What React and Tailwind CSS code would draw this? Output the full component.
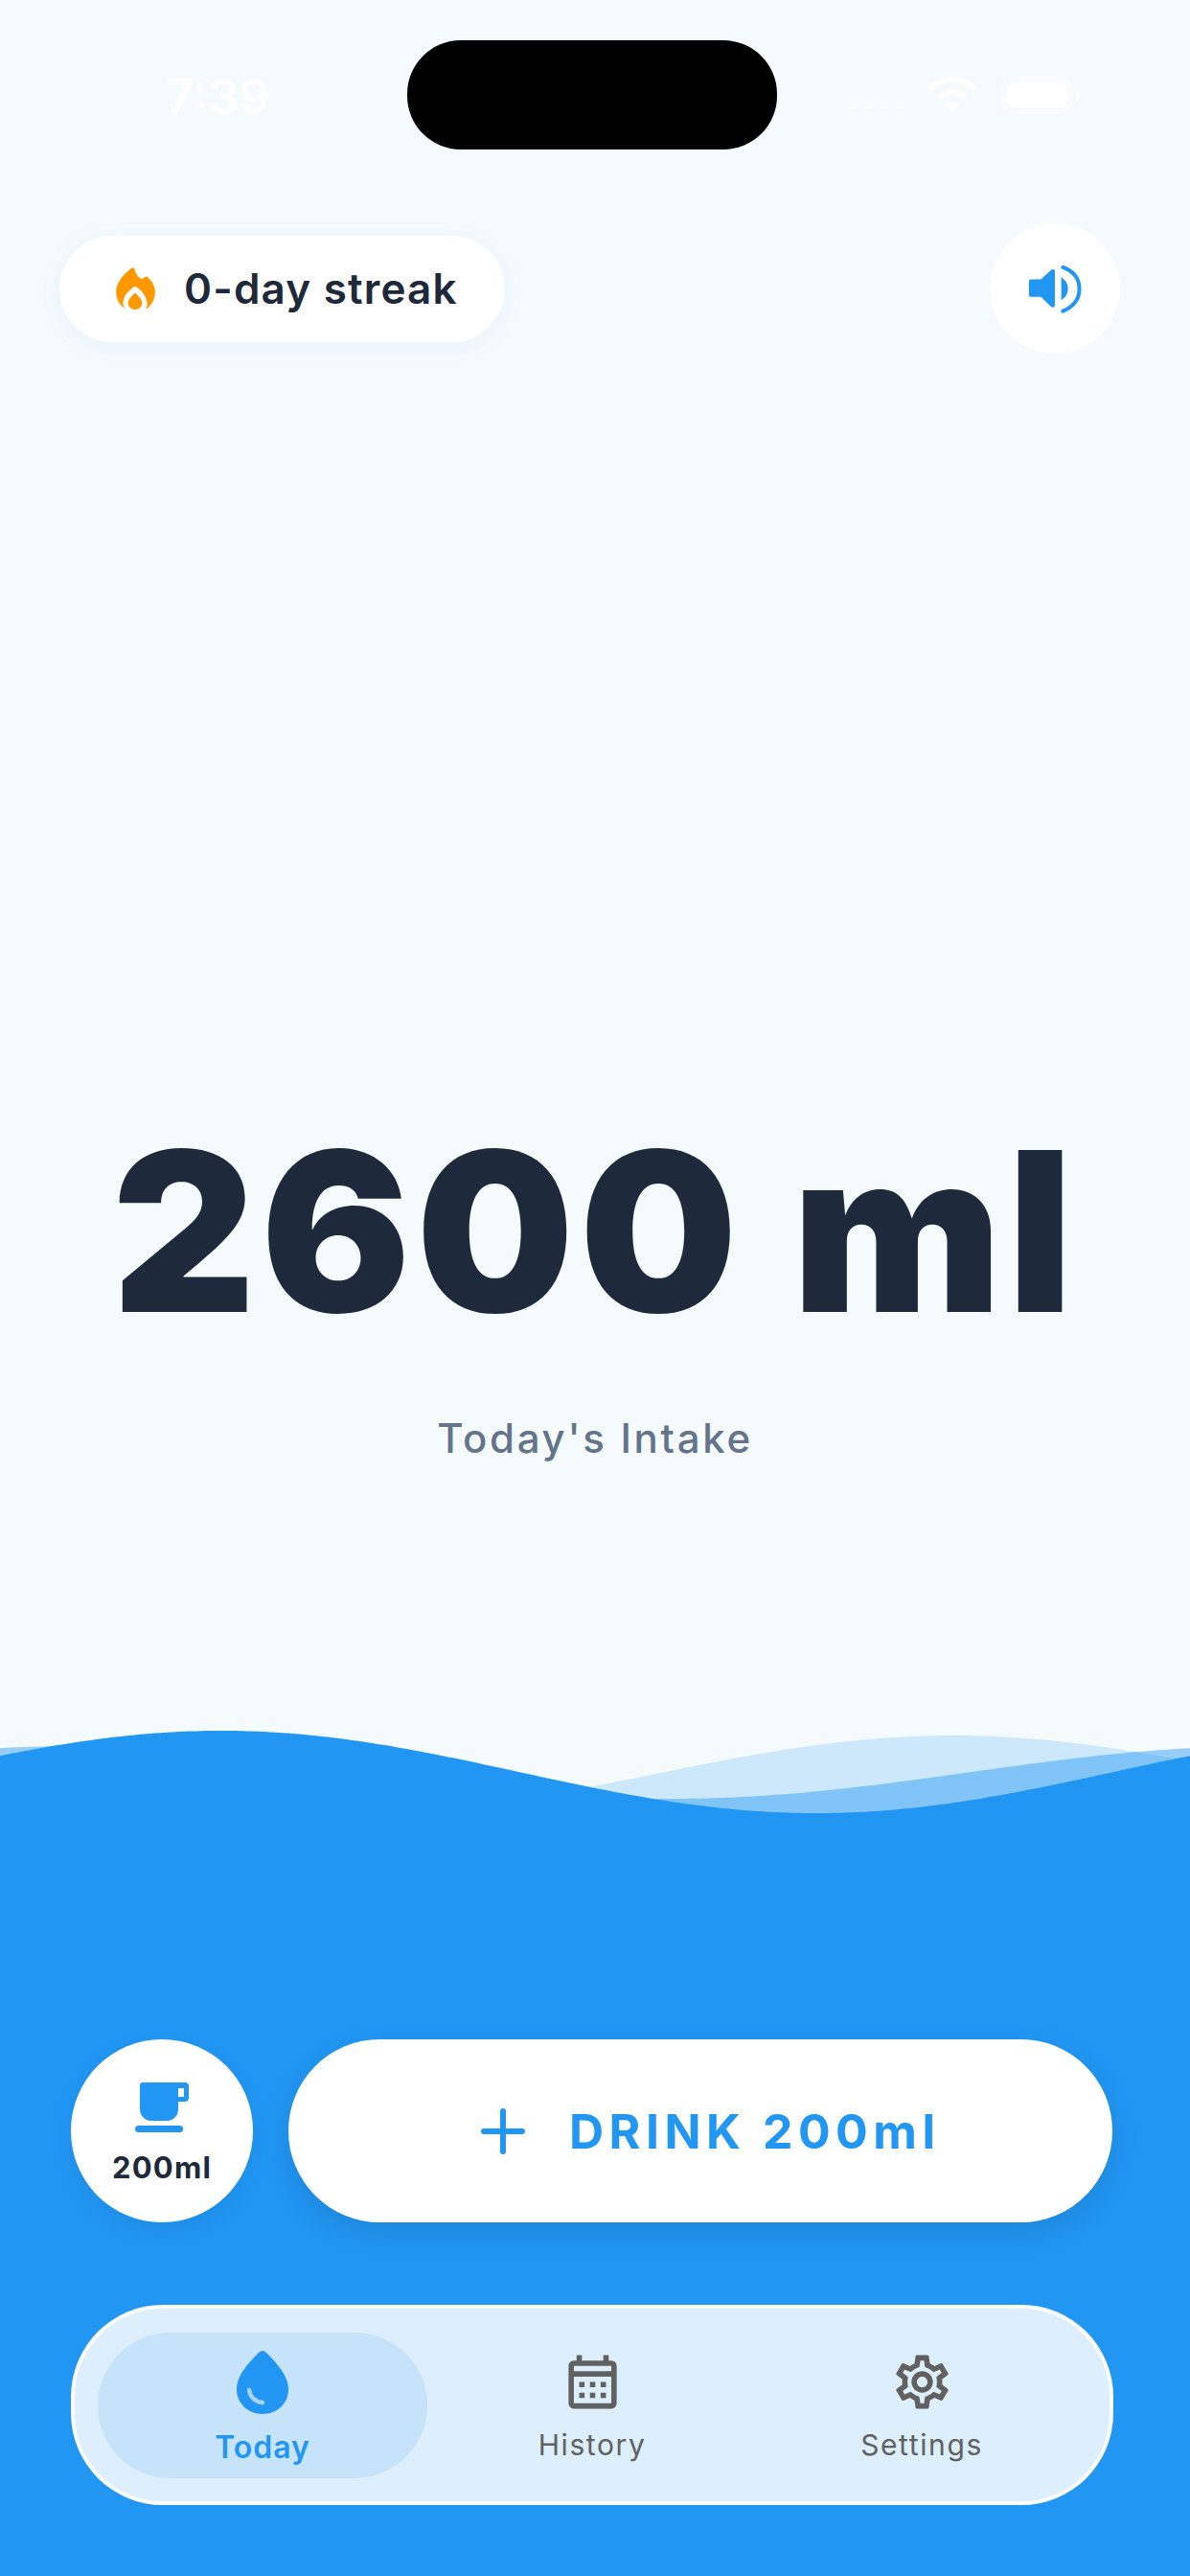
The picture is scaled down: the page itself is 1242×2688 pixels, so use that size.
import { MdOutlineSettings } from "react-icons/md";

const font = "font-[family-name:Inter,sans-serif]";

// sine wave closed along the bottom of the 1242x100 box
function wavePath(center, amp, peakX) {
  let d = "M0 100";
  for (let x = 0; x <= 1242; x += 6) {
    const y = center - amp * Math.cos(((x - peakX) / 1242) * 2 * Math.PI);
    d += ` L${x} ${y.toFixed(2)}`;
  }
  return d + " L1242 100 Z";
}

function Wifi() {
  return (
    <svg viewBox="0 0 52 38" className="h-[38px] w-[52px]" fill="white">
      <path d="M26 0c10 0 19 4 26 11l-4 5C42 10 34 6 26 6S10 10 4 16l-4-5C7 4 16 0 26 0z" />
      <path d="M26 13c6 0 12 2 16 7l-4 4c-3-3-7-5-12-5s-9 2-12 5l-4-4c4-5 10-7 16-7z" />
      <path d="M26 26c3 0 6 1 8 3L26 38l-8-9c2-2 5-3 8-3z" />
    </svg>
  );
}

function Flame() {
  return (
    <svg viewBox="0 0 123 133" className="h-[44px] w-[41px]" fill="#ff9800">
      <path d="M48 3Q54-2 58 5C62 16 68 32 79 36C84 36 88 32 92 30Q96 27 100 31C114 44 123 60 123 78C123 100 112 120 96 131L94 131C100 122 99 108 92 92C84 78 72 66 60 60C48 66 34 80 27 92C20 108 20 122 30 131C12 122 0 100 0 78C0 46 26 20 48 3Z" />
      <path d="M60 80C70 90 82 100 82 112C82 124 72 133 60 133C48 133 38 124 38 112C38 100 50 90 60 80Z" />
    </svg>
  );
}

function Speaker() {
  return (
    <svg viewBox="0 0 168 160" className="h-[53px] w-[56px]" fill="#2196f3">
      <path d="M8 50H40L70 22Q84 12 84 28V128Q84 144 70 134L40 105H8Q2 105 2 99V56Q2 50 8 50Z" />
      <path d="M104 43C118 52 125 64 125 79C125 94 118 106 104 115Z" />
      <path d="M109 12C142 24 161 48 161 80C161 112 142 136 109 150" fill="none" stroke="#2196f3" strokeWidth="12" strokeLinecap="round" />
    </svg>
  );
}

function Cup() {
  return (
    <svg viewBox="0 0 56 52" className="h-[52px] w-[56px]" fill="#2196f3">
      <path fillRule="evenodd" d="M8 0H52A4 4 0 0 1 56 4V16A4 4 0 0 1 52 20H45V28A12 12 0 0 1 33 40H17A12 12 0 0 1 5 28V3A3 3 0 0 1 8 0ZM45 6V15H51V6Z" />
      <rect x="0" y="45" width="50" height="7" rx="3.5" />
    </svg>
  );
}

function Drop() {
  return (
    <svg viewBox="0 0 54 66" className="h-[66px] w-[54px]">
      <path fill="#2196f3" d="M27 0Q29 0 31 2C42 13 54 26 54 40C54 55 42 66 27 66C12 66 0 55 0 40C0 26 12 13 23 2Q25 0 27 0Z" />
      <path d="M13 41C14 48 19 53 27 54" fill="none" stroke="#a6d3f9" strokeWidth="4.5" strokeLinecap="round" />
    </svg>
  );
}

function Calendar() {
  return (
    <svg viewBox="0 0 24 24" className="h-[67px] w-[67px]" fill="#616161">
      <path fillRule="evenodd" d="M5 22A2 2 0 0 1 3 20V6A2 2 0 0 1 5 4H6V2H8V4H16V2H18V4H19A2 2 0 0 1 21 6V20A2 2 0 0 1 19 22ZM5 20H19V10H5ZM5 8H19V6H5ZM7 14V12H9V14ZM11 14V12H13V14ZM15 14V12H17V14ZM7 18V16H9V18ZM11 18V16H13V18ZM15 18V16H17V18Z" />
    </svg>
  );
}

function NavTab({ icon, label, active }) {
  return (
    <div
      className={`flex h-[152px] w-[344px] flex-col items-center rounded-[76px] ${
        active ? "bg-[#c7e3fa] pt-[19px]" : "pt-[18px]"
      }`}
    >
      {icon}
      <span
        className={
          active
            ? "mt-[15px] text-[32px] leading-[40px] font-semibold tracking-[1px] text-[#2196f3]"
            : "mt-[12px] text-[30px] leading-[40px] font-normal tracking-[1.6px] text-[#616161]"
        }
      >
        {label}
      </span>
    </div>
  );
}

export default function App() {
  return (
    <div className={`${font} flex h-[2688px] w-[1242px] flex-col overflow-hidden bg-[#f5fafd]`}>
      {/* STATUS BAR */}
      <div className="mt-[42px] flex h-[114px] shrink-0 items-center">
        <div className="w-[425px] pt-[2px] pl-[173px] text-[51px] leading-none font-semibold text-white">7:39</div>
        <div className="h-[114px] w-[386px] rounded-[56px] bg-black" />
        <div className="flex flex-1 items-center pl-[76px]">
          <div className="flex items-end gap-[7px] self-end pb-[6px]">
            <span className="h-[9px] w-[9px] rounded-[2px] bg-white/40" />
            <span className="h-[9px] w-[9px] rounded-[2px] bg-white/40" />
            <span className="h-[9px] w-[9px] rounded-[2px] bg-white/40" />
            <span className="h-[9px] w-[9px] rounded-[2px] bg-white/40" />
          </div>
          <div className="ml-[24px]">
            <Wifi />
          </div>
          <div className="ml-[24px] flex h-[39px] w-[76px] items-center justify-center rounded-[14px] border-[4px] border-white/40">
            <div className="h-[28px] w-[65px] shrink-0 rounded-[9px] bg-white" />
          </div>
          <div className="ml-[3px] h-[12px] w-[4px] rounded-r-[3px] bg-white/70" />
        </div>
      </div>

      {/* TOP ROW */}
      <div className="mt-[77px] flex items-center justify-between pr-[73px] pl-[62px]">
        <div className="flex h-[111px] w-[465px] items-center rounded-[56px] bg-white pl-[59px] shadow-[0_4px_24px_rgba(33,150,243,0.06)]">
          <Flame />
          <span className="ml-[30px] text-[44px] leading-none font-semibold tracking-[1.2px] text-[#1e293b]">0-day streak</span>
        </div>
        <div className="flex h-[136px] w-[136px] items-center justify-center rounded-full bg-white">
          <Speaker />
        </div>
      </div>

      {/* INTAKE */}
      <div className="flex flex-1 flex-col items-center pt-[786px]">
        <div className="text-[232px] leading-[260px] font-black tracking-[5.5px] whitespace-nowrap text-[#1e293b]">2600 ml</div>
        <div className="mt-[61px] text-[42px] leading-[50px] font-medium tracking-[2.7px] text-[#64748b]">Today's Intake</div>
      </div>

      {/* WAVES */}
      <svg viewBox="0 0 1242 100" className="block h-[100px] w-[1242px] shrink-0">
        <path d={wavePath(51, 40, 995)} fill="#2196f3" fillOpacity="0.18" />
        <path d={wavePath(49.5, 27.5, 79)} fill="#2196f3" fillOpacity="0.44" />
        <path d={wavePath(49, 43, 231)} fill="#2196f3" />
      </svg>

      {/* WATER */}
      <div className="flex h-[788px] shrink-0 flex-col bg-[#2196f3] pt-[228px] pl-[74px]">
        <div className="flex items-center gap-[37px]">
          <div className="flex h-[191px] w-[190px] flex-col items-center rounded-full bg-white pt-[45px] shadow-[0_8px_24px_rgba(0,0,0,0.06)]">
            <Cup />
            <span className="mt-[19px] text-[31px] leading-[36px] font-bold tracking-[1.2px] text-[#1e293b]">200ml</span>
          </div>
          <div className="flex h-[191px] w-[860px] items-center gap-[46px] rounded-[96px] bg-white pl-[201px] shadow-[0_10px_30px_rgba(0,0,0,0.1)]">
            <svg viewBox="0 0 46 48" className="h-[48px] w-[46px]" fill="none" stroke="#2196f3" strokeWidth="6" strokeLinecap="round">
              <path d="M23 3V45M3 24H43" />
            </svg>
            <span className="text-[50px] leading-none font-bold tracking-[5.5px] text-[#2196f3]">DRINK 200ml</span>
          </div>
        </div>

        {/* BOTTOM NAV */}
        <div className="mt-[86px] flex h-[209px] w-[1088px] items-center justify-center rounded-[96px] border-[4px] border-white/85 bg-[#ddeefc]">
          <NavTab active icon={<Drop />} label="Today" />
          <NavTab icon={<Calendar />} label="History" />
          <NavTab icon={<MdOutlineSettings size={67} color="#616161" />} label="Settings" />
        </div>
      </div>
    </div>
  );
}
